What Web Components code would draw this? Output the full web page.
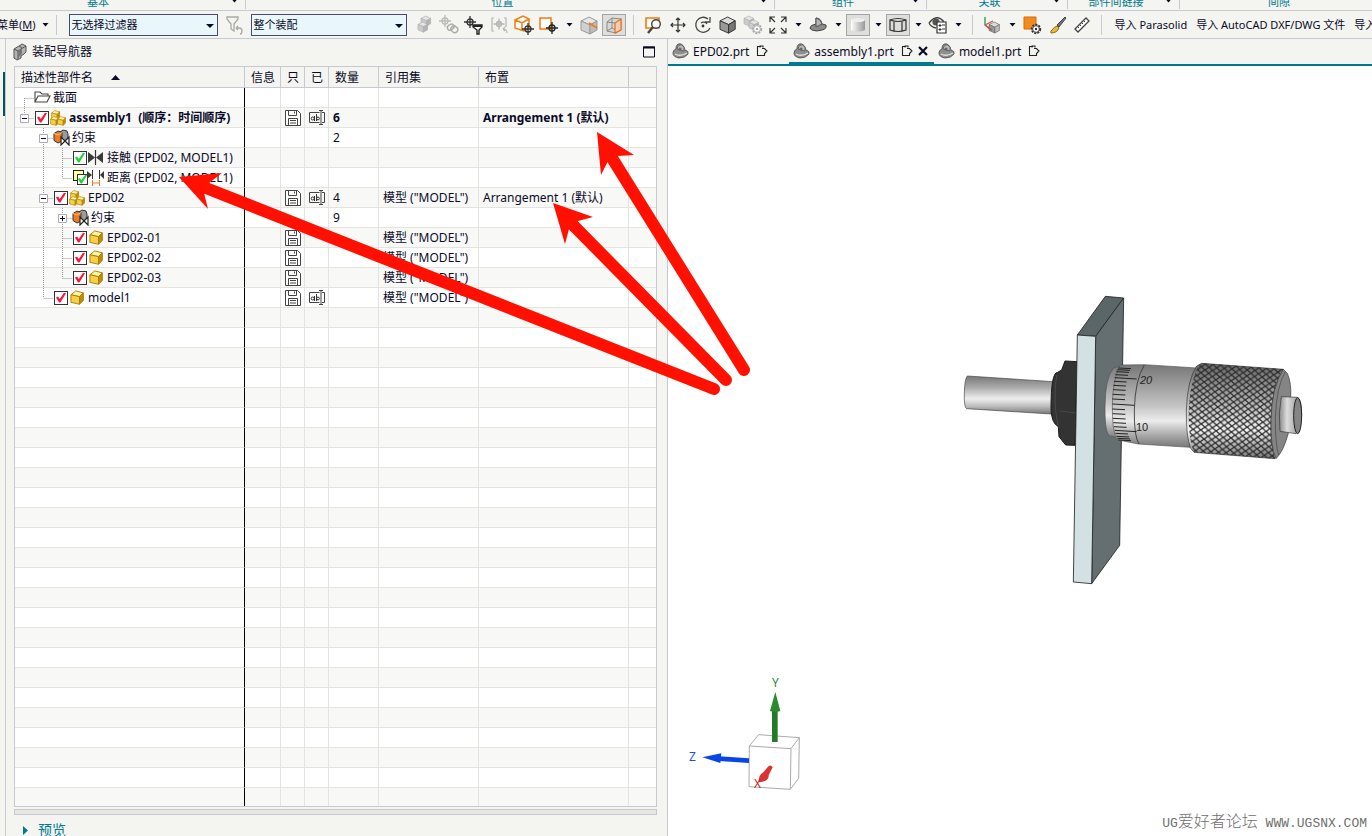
<!DOCTYPE html>
<html lang="zh-CN">
<head>
<meta charset="utf-8">
<title>装配导航器</title>
<style>
html,body{margin:0;height:100%;overflow:hidden;background:#f4f4f0}
body{font:12px/20px "Noto Sans","Noto Sans CJK SC",sans-serif;color:#0a0a28;
--line:#c8c8d2;--grid:#e3e3df;--teal:#007a8f;--panel:#f4f4f0}
</style>
</head>
<body>
<nx-app></nx-app>
<script>
const define=(name,html,setup)=>customElements.define(name,class extends HTMLElement{
  connectedCallback(){
    if(this.shadowRoot)return;
    const t=document.createElement('template');
    t.innerHTML=typeof html==='function'?html(this):html;
    this.attachShadow({mode:'open'}).append(t.content.cloneNode(true));
    if(setup)setup(this);
  }
});

/* ---------- icons ---------- */
const cube=(x,y,s,a,b,c,o)=>`<g transform="translate(${x} ${y}) scale(${s})" stroke="${o}" stroke-linejoin="round"><path d="M0 4 8 0l8 4-7 4z" fill="${a}"/><path d="M0 4l9 4v9l-9-4z" fill="${b}"/><path d="M16 4l-7 4v9l7-4z" fill="${c}"/></g>`;
const gold=(x,y,s)=>`<g transform="translate(${x} ${y}) scale(${s})" stroke="#b07c00" stroke-linejoin="round"><path d="M1 5 6 1l8 2-4 4z" fill="#fff6a8"/><path d="M1 5l9 2v8l-9-2z" fill="#f6d046"/><path d="M10 7l4-4v8l-4 4z" fill="#c08a0c"/></g>`;
const target=(x,y,r,c)=>`<g fill="none" stroke="${c}" stroke-width="1.3"><circle cx="${x}" cy="${y}" r="${r}"/><path d="M${x-r-3} ${y}h${2*r+6}M${x} ${y-r-3}v${2*r+6}"/></g>`;
const gear=(x,y,c)=>`<circle cx="${x}" cy="${y}" r="4.2" fill="#f4f4f0" stroke="${c}" stroke-width="2" stroke-dasharray="2 1.1"/><circle cx="${x}" cy="${y}" r="3.4" fill="#fff" stroke="${c}"/><circle cx="${x}" cy="${y}" r="1.2" fill="${c}"/>`;
const link='<path d="M7 3l3-2 4 1 1 3v5l-3 3" fill="#9b9b9b" stroke="#333"/><path d="M1 4.500 5 2l4 1.500v8.500L5 14l-4-2.500z" fill="#ef7a22" stroke="#333"/><path d="M1 4.500 5 6l4-2.500" fill="none" stroke="#ffc08a"/><path d="M8 8l8 8V8l-8 8z" fill="#fff" stroke="#222" stroke-width="1.2"/>';
const ICONS={
  part:[20,'<path d="M2 12q0-3 3-4 0-6 5-5 3 1 4 6 4 1 3 4-3 4-9 4-6-1-6-5z" fill="#8e8e8e" stroke="#5a5a5a"/><path d="M6 8q1-5 5-4 3 2 2 6-5-1-7-2z" fill="#b9b9b9" stroke="#666"/><path d="M4 13q5 3 12-1" fill="none" stroke="#e2e2e2" stroke-width="1.4"/><circle cx="9" cy="8" r="1.500" fill="#666"/>'],
  nav:[18,'<path d="M3 6l5-3 3-2 4 2v6l-2 2-3 2v2l-4 2-3-2z" fill="#b4b4b4" stroke="#555"/><path d="M3 6l4 2v8M7 8l3-2 5-3M8 3l3 2" fill="none" stroke="#555"/><path d="M7 8l4-2v5l-4 4z" fill="#777"/>'],
  funnel:[20,'<g fill="none" stroke="#a9a9a6" stroke-width="1.3"><path d="M3 2h11v2l-4 5v7l-3-2V9L3 4z"/><path d="M12 13h3q3 0 3 3t-2 3M12 13l2-2m-2 2 2 2"/></g>'],
  cubes:[20,cube(7,1,.6,'#e4e4e4','#ccc','#b4b4b4','#aaa')+cube(4,7,.6,'#e4e4e4','#ccc','#b4b4b4','#aaa')],
  chain:[20,target(6,6,3,'#bbb')+'<g fill="none" stroke="#aaa" stroke-width="1.4"><rect x="8" y="10" width="7" height="5" rx="2.5" transform="rotate(-35 11 12)"/><rect x="12" y="11" width="7" height="6" rx="3" transform="rotate(40 15 14)"/></g>'],
  tfunnel:[20,target(6,7,3,'#333')+'<path d="M9 10h9v2l-3 3v4h-2v-4l-4-3z" fill="#fff" stroke="#222" stroke-width="1.4"/><path d="M9 10h9v2H9z" fill="#222"/>'],
  brack:[20,target(10,9,2.5,'#b5b5b3')+'<path d="M5 3H3v13h2M15 3h2v9M18 18q0-4-4-4m0 0 2-2m-2 2 2 2" fill="none" stroke="#b5b5b3" stroke-width="1.2"/>'],
  cubeT:[20,'<path d="M1 5 9 1l6 3v9l-5 3-9-3zM1 5l7 3 7-4M8 8v8" fill="#fff" stroke="#ef7d12" stroke-width="1.5"/>'+target(14,14,3,'#333')],
  rectT:[20,'<path d="M1 3h11v11H1z" fill="#fff" stroke="#ef7d12" stroke-width="1.5"/>'+target(13,13,3,'#222')],
  cubeL:[20,cube(2,2,1,'#e6e6e6','#d0d0d0','#bcbcbc','#999')+'<path d="M10 8l8 5" stroke="#ef7d12" stroke-width="1.8"/>'],
  cubeR:[20,'<path d="M3 7 8 3l9 1v11l-5 3-9-2z" fill="#d8d8d6" stroke="#888"/><path d="M8 3v10l-5 3M8 13l4 2M3 7l8 1" stroke="#888" fill="none"/><path d="M11 8l6-4v11l-6 3z" fill="#ead0bb" stroke="#ef6d12" stroke-width="1.2"/>'],
  zoom:[20,'<path d="M3 3h13v10H3z" fill="#fffdf5" stroke="#ef7d12" stroke-width="1.6"/><circle cx="13" cy="9" r="4.3" fill="#f6f6f2" stroke="#444" stroke-width="1.4"/><path d="M10 12l-5 6" stroke="#444" stroke-width="2.4"/>'],
  pan:[20,'<path d="M10 3v14M3 10h14M8 5l2-2 2 2M8 15l2 2 2-2M5 8l-2 2 2 2M15 8l2 2-2 2" fill="none" stroke="#333" stroke-width="1.2"/>'],
  rot:[20,'<path d="M15 4A7.5 7.5 0 1 0 17 13M17 2v5h-5M14 9a4 4 0 0 0-6-1" fill="none" stroke="#444" stroke-width="1.3"/><circle cx="10" cy="11" r="1.4" fill="#333"/>'],
  cubeD:[20,cube(2,2,.95,'#ddd','#999','#777','#333')],
  cubeG:[20,cube(1,1,.6,'#e4e4e4','#ccc','#bbb','#aaa')+cube(6,5,.6,'#e4e4e4','#ccc','#bbb','#aaa')+gear(14,14,'#aaa')],
  fit:[20,'<path d="M2 7V2h5M13 2h5v5M18 13v5h-5M7 18H2v-5M2 2l5 5M18 2l-5 5M18 18l-5-5M2 18l5-5" fill="none" stroke="#333" stroke-width="1.2"/>'],
  clip3:[20,'<path d="M2 13q0-3 6-4V3q5 0 6 6l4 1q1 4-4 5-6 2-10 0-2-1-2-2z" fill="#8b8b8b" stroke="#444"/><path d="M8 3q5 1 6 6l-6 3z" fill="#b6b6b6" stroke="#555"/>'],
  cylS:[22,'<defs><linearGradient id="g"><stop stop-color="#fff"/><stop offset="1" stop-color="#999"/></linearGradient></defs><path d="M4 6q7-4 14 0v10q-7 3-14 0z" fill="url(#g)"/><ellipse cx="11" cy="6" rx="7" ry="2" fill="#eee"/>'],
  cylW:[22,'<path d="M3 6q8-3 16 0v10q-8 3-16 0z" fill="#dcdcd9" stroke="#333" stroke-width="1.2"/><path d="M3 6q8 3 16 0M7 8v9M15 8v9" fill="none" stroke="#333" stroke-width="1.2"/>'],
  eye:[20,'<path d="M1 8q8-10 15-1M1 8q2 4 7 5" fill="none" stroke="#444" stroke-width="1.4"/><circle cx="8" cy="7" r="3.6" fill="#555"/><path d="M9 7h9v11H9z" fill="#fff" stroke="#333" stroke-width="1.2"/><path d="M11 10h2v1h-2zM11 14h2v1h-2zM14 10h3M14 14h3" stroke="#333" fill="#333"/>'],
  csys:[20,cube(7,7,.65,'#ddd','#999','#bbb','#666')+'<path d="M3 2v8l7 5" fill="none" stroke="#1f9a55" stroke-width="1.3"/><path d="M3 10l8-4M3 10l6 5" stroke="#e34848" stroke-width="1.3"/>'],
  orgear:[20,'<path d="M2 2h12v12H2z" fill="#f28a1e" stroke="#d66d05"/>'+gear(14,14,'#333')],
  brush:[20,'<path d="M18 2 10 10l2 2 7-9z" fill="#777" stroke="#444"/><path d="M10 11l2 2q-2 5-8 5-1-2 1-3 2-3 5-4z" fill="#e7b93c" stroke="#8b6a10"/>'],
  ruler:[20,'<path d="M3 14 14 3l3 3L6 17z" fill="#fff" stroke="#444" stroke-width="1.3"/><path d="M6 12l1 1M8 10l1 1M10 8l1 1M12 6l1 1" stroke="#444"/>'],
  folder:[17,'<path d="M1 13V3h5l2 2h6v2M1 13l3-6h12l-3 6z" fill="#fff" stroke="#444" stroke-width="1.1"/>'],
  asm:[17,gold(2,1,.62)+gold(1,7,.62)+gold(8,7,.62)],
  prt:[17,gold(2,1,.95)],
  cons:[17,link],
  touch:[17,'<path d="M1 3l7 5.5L1 14zM16 3 9 8.500l7 5.500z" fill="#3a3a3a"/><path d="M8.500 1v15" stroke="#333" stroke-width="1.2"/>'],
  dist:[17,'<path d="M0 2l5 4-5 4zM17 2l-4 4 4 4z" fill="#3a3a3a"/><path d="M5.500 1v9M12.500 1v9" stroke="#333"/><path d="M5.500 11v6M12.500 11v6M6 14h6" stroke="#e97b2a"/>'],
  save:[16,'<path d="M.5.5h12l3 3v12H.5z" fill="#fff" stroke="#444"/><path d="M3.500.5v5h8v-5M9.500 1.500v2M3.500 15.500v-7h9v7M5 10.500h6M5 13h6" fill="none" stroke="#444"/>'],
  clip:[12,'<path d="M5 1.500H1.500v9h7V8M4 2.500V1h3v1.500M6 3.500h2.500L11 6 8.500 8.500" fill="none" stroke="#222" stroke-width="1.1"/>'],
  close:[10,'<path d="M1 1l8 8M9 1l-8 8" stroke="#0a0a28" stroke-width="2.2"/>'],
  max:[12,'<path d="M.5 1h11v10H.5z" fill="none" stroke="#0a0a28"/><path d="M0 1.500h12" stroke="#0a0a28" stroke-width="2"/>'],
  down:[9,'<path d="M1.500 3h6l-3 3.500z" fill="#0a0a28"/>'],
  pick:[9,'<path d="M1 3h8L5 7z" fill="#0a0a28"/>'],
  up:[9,'<path d="M0 7h9L4.500 2z" fill="#0a0a28"/>'],
  right:[9,'<path d="M2 0v9l5-4.500z" fill="#007a8f"/>']
};
define('nx-icon',el=>{const [s,d]=ICONS[el.getAttribute('name')];
  return `<style>:host{display:inline-flex;flex:none}svg{display:block}</style><svg width="${s}" height="${s}" viewBox="0 0 ${s} ${s}" aria-hidden="true">${d}</svg>`});

/* ---------- ribbon footer ---------- */
define('nx-ribbon',()=>{
  const g=[['基本',1],['位置',1],['组件',1],['关联',1],['部件间链接',1],['间隙',0]];
  return `<style>
  :host{display:grid;grid-template-columns:246fr 529fr 152fr 141fr 112fr 192fr;height:10px;overflow:hidden;border-bottom:1px solid var(--line);font-size:11px;line-height:14px;color:var(--teal)}
  div{display:flex;align-items:flex-end;height:9px;border-right:1px solid var(--line);box-sizing:border-box}
  div:first-of-type span{padding-right:34px}
  div:last-child{border:0;padding-left:6px}
  span{flex:1;text-align:center;white-space:nowrap}
  nx-icon{width:9px;margin:0 6px 4px 0}
  </style>`+g.map(([t,a])=>`<div><span>${t}</span>${a?'<nx-icon name="down"></nx-icon>':''}</div>`).join('')});

/* ---------- toolbar ---------- */
define('nx-tool',el=>`<style>
  :host{display:flex;flex:none;width:25px;justify-content:center}
  :host([drop]){width:15px}
  button{all:unset;box-sizing:border-box;display:flex;align-items:center;justify-content:center;width:24px;height:22px}
  :host([drop]) button{width:15px}
  :host([pressed]) button{background:#dededa;border:1px solid #a3a3a8}
  </style><button aria-label="${el.getAttribute('icon')}"><nx-icon name="${el.getAttribute('icon')}"></nx-icon></button>`);

define('nx-toolbar',()=>{
  const t=(s)=>s.split(' ').map(n=>n==='|'?'<i></i>':n==='v'?'<nx-tool icon="down" drop></nx-tool>':n[0]==='*'?`<nx-tool icon="${n.slice(1)}" pressed></nx-tool>`:`<nx-tool icon="${n}"></nx-tool>`).join('');
  return `<style>
  :host{display:flex;align-items:center;height:27px;overflow:hidden;border-bottom:1px solid var(--line);font-size:11px;line-height:16px;white-space:nowrap}
  i{flex:none;width:1px;height:20px;background:var(--line);margin:0 7px 0 6px}
  button{all:unset;flex:none;padding:0 5px 0 4px}
  .menu{display:flex;align-items:center;gap:5px;padding:0;margin-left:-3px}
  label{position:relative;display:flex;flex:none}
  label nx-icon{position:absolute;right:4px;top:7px}
  select{appearance:none;box-sizing:border-box;height:22px;border:1px solid #4a4a6a;border-radius:0;background:#e9f7fa;color:inherit;font:inherit;padding:0 14px 0 2px;margin:0}
  .a{width:149px}.b{width:156px}
  label:first-of-type{margin-left:5px}
  .f{margin:0 4px}
  .g{margin-left:5px}
  .imp{display:flex;margin-left:2px}
  </style>
  <button class="menu"><span>菜单(<u>M</u>)</span><nx-icon name="down"></nx-icon></button><i></i>
  <label><select class="a" aria-label="过滤器"><option>无选择过滤器</option></select><nx-icon name="pick"></nx-icon></label>
  <nx-tool class="f" icon="funnel"></nx-tool>
  <label><select class="b" aria-label="范围"><option>整个装配</option></select><nx-icon name="pick"></nx-icon></label>
  <nx-tool class="g" icon="cubes"></nx-tool>${t('chain tfunnel brack cubeT rectT v cubeL *cubeR | zoom pan rot cubeD cubeG fit v clip3 v *cylS v *cylW v eye v | csys v orgear brush ruler |')}
  <div class="imp"><button>导入 Parasolid</button><button>导入 AutoCAD DXF/DWG 文件</button><button>导入</button></div>`});

/* ---------- tree ---------- */
define('nx-check',el=>`<style>
  :host{display:flex;flex:none}
  input{appearance:none;width:14px;height:14px;margin:0;border:1px solid #333;background:#fff;box-sizing:border-box;position:relative}
  input::before{content:"";position:absolute;left:1px;top:1px;width:10px;height:10px;background:var(--tick,#f5183c);clip-path:polygon(0 50%,20% 40%,38% 65%,82% 0,100% 8%,44% 100%,30% 100%)}
  :host([green]),:host([stack]){--tick:#1fd03a}
  :host([stack]){box-sizing:border-box;width:14px;height:16px;padding:4px 0 0 4px;background:linear-gradient(#ffffa0,#ffffa0) 1px 1px/9px 9px no-repeat,linear-gradient(#222,#222) 0 0/11px 11px no-repeat}
  :host([stack]) input{flex:none;width:11px;height:11px}
  :host([stack]) input::before{left:0;top:0;width:9px;height:9px}
  </style><input type="checkbox" checked aria-label="${el.getAttribute('label')}">`);

/* guide kinds: v vertical, t tee, l elbow, s start, - and + expanders, ^ expander at the foot of a branch */
define('nx-guide',el=>{
  const k=el.getAttribute('kind');let d='',box='';
  if('vtl-+^'.includes(k))d+='M9.500 0v10';
  if('vts-+'.includes(k))d+='M9.500 10v10';
  if('tls-+^'.includes(k))d+='M9.500 10.500h10';
  if('-+^'.includes(k))box='<path d="M5.500 6.500h8v8h-8z" fill="#fff" stroke="#aaaabc"/><path d="M7 10.500h5'+(k==='+'?'M9.500 8v5':'')+'" stroke="#0a0a28"/>';
  return `<style>:host{display:flex;flex:none;width:19px;height:20px}</style><svg width="19" height="20" aria-hidden="true"><path d="${d}" stroke="#999" stroke-dasharray="1 1" fill="none"/>${box}</svg>`});

define('nx-tree',()=>{
  const M='模型 ("MODEL")',A='Arrangement 1 (默认)';
  const rows=[
    ['s','','folder','截面'],
    ['^','r','asm','assembly1  (顺序：时间顺序)',1,1,'6','',A,'b'],
    [' -','','cons','约束',0,0,'2'],
    [' vt','g','touch','接触 (EPD02, MODEL1)'],
    [' vl','y','dist','距离 (EPD02, MODEL1)'],
    [' -','r','asm','EPD02',1,1,'4',M,A],
    [' v+','','cons','约束',0,0,'9'],
    [' vt','r','prt','EPD02-01',1,0,'',M],
    [' vt','r','prt','EPD02-02',1,0,'',M],
    [' vl','r','prt','EPD02-03',1,0,'',M],
    [' l','r','prt','model1',1,1,'',M]];
  while(rows.length<36)rows.push(null);
  const attr={r:'',g:'green',y:'stack'};
  const body=rows.map(r=>{
    if(!r)return '<tr>'+'<td></td>'.repeat(8)+'</tr>';
    const [g,c,ic,t,sv,ab,n,m,a,b]=r;
    return `<tr${b?' class="bold"':''}><td><div class="node">${[...g].map(k=>`<nx-guide kind="${k}"></nx-guide>`).join('')}${c?`<nx-check ${attr[c]} label="${t}"></nx-check>`:''}<nx-icon name="${ic}"></nx-icon><span>${t}</span></div></td><td></td><td>${sv?'<nx-icon class="cell" name="save"></nx-icon>':''}</td><td>${ab?'<nx-rename class="cell"></nx-rename>':''}</td><td>${n||''}</td><td>${m||''}</td><td>${a||''}</td><td></td></tr>`}).join('');
  return `<style>
  :host{display:block;overflow:hidden;border:1px solid var(--line);background:#fff}
  table{border-collapse:separate;border-spacing:0;table-layout:fixed;width:100%}
  col:nth-child(1){width:230px}col:nth-child(2){width:36px}col:nth-child(3),col:nth-child(4){width:24px}
  col:nth-child(5){width:50px}col:nth-child(6){width:100px}col:nth-child(7){width:150px}
  th,td{box-sizing:border-box;padding:0 0 0 4px;height:20px;line-height:19px;text-align:left;white-space:pre;overflow:hidden;border-right:1px solid var(--grid);border-bottom:1px solid var(--grid)}
  th{height:21px;line-height:18px;padding:2px 0 0 6px;font-weight:400;background:var(--panel);border-color:var(--line)}
  th nx-icon{margin-left:18px}
  td:first-child{padding:0;border-right-color:#000}
  th:last-child,td:last-child{border-right:0}
  tr:nth-child(even) td{background:#f8f8f7}
  .bold{font-weight:700}
  .cell{vertical-align:top;margin-top:2px}
  .node{display:flex;align-items:center;height:19px}
  .node nx-check{margin-left:1px}
  .node span{margin-left:2px}
  .node nx-check~span{margin-left:3px}
  </style>
  <table><colgroup>${'<col>'.repeat(8)}</colgroup><thead><tr><th>描述性部件名<nx-icon name="up"></nx-icon></th><th>信息</th><th>只</th><th>已</th><th>数量</th><th>引用集</th><th>布置</th><th></th></tr></thead><tbody>${body}</tbody></table>`});

define('nx-rename',`<style>:host{display:inline-flex}</style><svg width="16" height="16" aria-hidden="true"><path d="M10.500 2.500H.5v10h10M13 2.500h2.500v10H13M10 .5h4M10 14.500h4M12 .5v14" fill="none" stroke="#444"/><circle cx="3.700" cy="8.500" r="1.500" fill="none" stroke="#333"/><path d="M5.500 6v5M7.500 4v7" stroke="#333"/><circle cx="9" cy="8.500" r="1.400" fill="none" stroke="#333"/></svg>`);

define('nx-navigator',`<style>
  :host{display:grid;grid-template-rows:27px minmax(0,1fr) 6px 21px;padding:0 10px 0 8px;min-width:0;min-height:0}
  header{display:flex;align-items:center;gap:3px;padding:0 2px 2px 0;margin-left:-3px}
  header button{margin-left:auto}
  h1{font:inherit;margin:0}
  button{all:unset;display:flex;align-items:center}
  nx-tree{margin-bottom:2px}
  .bar{border:1px solid var(--line);background:#e6e8e0;box-sizing:border-box}
  .preview{font-size:14px;line-height:20px;color:var(--teal);gap:8px;padding:5px 0 0 7px;height:20px;white-space:nowrap}
  </style>
  <header><nx-icon name="nav"></nx-icon><h1>装配导航器</h1><button aria-label="最大化"><nx-icon name="max"></nx-icon></button></header>
  <nx-tree></nx-tree><div class="bar"></div>
  <button class="preview"><nx-icon name="right"></nx-icon>预览</button>`);

/* ---------- documents ---------- */
define('nx-tab',el=>`<style>
  :host{display:flex;align-items:center;box-sizing:border-box;height:25px;padding:0 6px 0 3px;border-bottom:2px solid transparent;white-space:nowrap;line-height:22px}
  :host([active]){border-color:var(--teal)}
  button{all:unset;display:flex;align-items:center;gap:1px}
  button span{padding:2px 0 0 1px}
  nx-icon[name=clip]{margin-left:6px}
  .x{margin-left:5px;visibility:hidden}
  :host([active]) .x{visibility:visible}
  </style><button><nx-icon name="part"></nx-icon><span><slot></slot></span><nx-icon name="clip"></nx-icon></button><button class="x" aria-label="关闭"><nx-icon name="close"></nx-icon></button>`);

const ticks=(()=>{let s='';for(let i=0;i<21;i++){
  const a=-1.3+i*2.6/20,y=372+112*Math.sin(a),x=487+24*(1-Math.cos(a)),long=[4,10,16].includes(i);
  s+=`M${x.toFixed(0)} ${y.toFixed(0)}L${(x+(long?66:38)).toFixed(0)} ${(y+(long?4:2)).toFixed(0)}`}
  return s})();
define('nx-scene',`<style>:host{display:block;position:relative;overflow:hidden;min-height:0;background:#fff}
  svg{display:block;width:100%}
  p{position:absolute;right:5px;bottom:2px;margin:0;font:13px/20px "Liberation Mono",monospace;color:#707070;white-space:pre}
  p span{font-family:"Noto Sans CJK SC",sans-serif;font-size:16px;font-weight:300}
  </style>
  <svg viewBox="668 66 704 770" role="img" aria-label="assembly1">
  <defs>
  <linearGradient id="rod" x2="0" y2="1"><stop stop-color="#777"/><stop offset=".3" stop-color="#aaa"/><stop offset=".6" stop-color="#eee"/><stop offset=".8" stop-color="#bbb"/><stop offset="1" stop-color="#777"/></linearGradient>
  <linearGradient id="drum" x2="0" y2="1"><stop stop-color="#777"/><stop offset=".25" stop-color="#9d9d9d"/><stop offset=".5" stop-color="#c4c4c4"/><stop offset=".68" stop-color="#ececec"/><stop offset=".85" stop-color="#aaa"/><stop offset="1" stop-color="#777"/></linearGradient>
  <linearGradient id="kn" x2="0" y2="1"><stop stop-color="#666"/><stop offset=".4" stop-color="#b4b4b4"/><stop offset=".7" stop-color="#f6f6f6"/><stop offset="1" stop-color="#777"/></linearGradient>
  <linearGradient id="knob"><stop stop-color="#888"/><stop offset=".35" stop-color="#ddd"/><stop offset="1" stop-color="#888"/></linearGradient>
  <pattern id="hatch" width="23" height="18" patternUnits="userSpaceOnUse" patternTransform="rotate(4)"><path d="M0 0l23 18M23 0L0 18" stroke="#2c2c2c" stroke-width="4"/></pattern>
  </defs>
  <g transform="translate(950 280) scale(.333333)" stroke-linejoin="round">
  <path d="M52 288l258 17-7 97-253-16q-8-2-7-46t9-52z" fill="url(#rod)" stroke="#444" stroke-width="2"/>
  <path d="M345 243l37 2-7 251-28-1-20-25-2-30q-21-10-22-55 0-108 20-108l12-7z" fill="#333" stroke="#1c1c1c" stroke-width="3"/>
  <path d="M320 285q-12 80 4 150M328 393l52 6" fill="none" stroke="#555" stroke-width="2"/>
  <path d="M382 165l84-116 55 5-84 115z" fill="#5a6668" stroke="#222" stroke-width="2.500"/>
  <path d="M437 169l84-115-12 742-84 115z" fill="#656e70" stroke="#222" stroke-width="2.500"/>
  <path d="M382 165l55 4-12 742-55-5z" fill="#d3e0e4" stroke="#222" stroke-width="2.500"/>
  <path d="M490 264q-25 30-25 121t20 83l25 10 10-223z" fill="url(#drum)" stroke="#555" stroke-width="2"/>
  <path d="M510 255l73-1 157 10-20 238-155-10-65-13q-14-29-13-104t23-120z" fill="url(#drum)" stroke="#555" stroke-width="2"/>
  <path d="M583 255q-28 45-30 135-1 80 14 102" fill="none" stroke="#333" stroke-width="2.500"/>
  <path d="${ticks}" fill="none" stroke="#222" stroke-width="3"/>
  <path d="M740 258l15-8 245 18q-35 52-37 152-1 80 12 116l-243-19-10-12q-14-35-13-115 3-90 31-132z" fill="url(#kn)" stroke="#333" stroke-width="2"/>
  <path d="M745 258l10-8 245 18q-35 52-37 152-1 80 12 116l-243-19q-16-37-16-117 3-90 29-142z" fill="url(#hatch)"/>
  <path d="M1000 268l12 12q13 30 10 72l-7 108q-15 55-37 76-17-36-15-116 2-100 37-152z" fill="#858585" stroke="#333" stroke-width="2"/>
  <path d="M1006 275q-27 45-30 140 0 80 10 110" fill="none" stroke="#444" stroke-width="2"/>
  <path d="M994 350l49 2q12 8 12 53-2 45-17 56l-48-7q-6-54 4-104z" fill="url(#knob)" stroke="#333" stroke-width="2"/>
  <ellipse cx="1043" cy="407" rx="12" ry="54" fill="#858585" stroke="#222" stroke-width="3"/>
  </g>
  <g font-family="Liberation Sans,sans-serif" font-size="11" fill="#222"><text x="1140" y="384" font-style="italic">20</text><text x="1136" y="431">10</text></g>
  <g transform="translate(670 660) scale(.333333)">
  <path d="M238 258l125 8-2 122-124-8zM238 258l28-34 122 9-25 33M388 233l-2 122-25 33" fill="none" stroke="#aaa" stroke-width="3"/>
  <path d="M306 150h17v96h-17z" fill="#237a27"/><path d="M316 96l-16 57q15 6 31 0z" fill="#2a8a2d"/>
  <path d="M237 295v14l-90-6v-14z" fill="#0a45e8"/><path d="M97 292l57-12-3 29z" fill="#0a45e8"/>
  <path d="M294 320q8-8 14 2l-12 24q2 18-30 21 0-24 14-30z" fill="#d93434"/>
  </g>
  <g font-family="Noto Sans,sans-serif" font-size="12"><text x="772" y="687" fill="#2a8a2d">Y</text><text x="689" y="761" fill="#1450f0">Z</text><text x="754" y="788" fill="#c22">X</text></g>
  </svg>
  <p>UG<span>爱好者论坛</span> WWW.UGSNX.COM</p>`);

define('nx-documents',`<style>
  :host{display:flex;flex-direction:column;border-left:1px solid var(--line);min-width:0;min-height:0}
  nav{display:flex;flex:none;height:25px;border-bottom:2px solid var(--teal)}
  nx-scene{flex:1}
  </style><nav><nx-tab>EPD02.prt</nx-tab><nx-tab active>assembly1.prt</nx-tab><nx-tab>model1.prt</nx-tab></nav><nx-scene></nx-scene>`);

/* ---------- red callout arrows, laid over the whole window ---------- */
define('nx-callouts',`<style>:host{position:absolute;inset:0;pointer-events:none}svg{width:100%;height:100%;display:block}</style>
  <svg aria-hidden="true"><g stroke="#ff1000" stroke-width="12" stroke-linecap="round"><path d="M714 389L206 188M726 380L573 225M744 370L612 158"/></g>
  <g fill="#ff1000"><path d="M179 177l43-4-13 10-5 10 4 16z"/><path d="M553 203l40 14-15 4-9 8-4 15z"/><path d="M597 132l37 23-16 1-10 5-7 14z"/></g></svg>`);

define('nx-app',`<style>
  :host{display:flex;flex-direction:column;height:100vh;position:relative;overflow:hidden}
  main{flex:1;min-height:0;display:grid;grid-template-columns:6px minmax(0,661fr) minmax(0,705fr);grid-template-rows:minmax(0,1fr)}
  aside{box-sizing:border-box;border-right:1px solid var(--line);padding-top:33px}
  aside div{height:44px;margin-left:3px;background:#00545a}
  nx-ribbon,nx-toolbar{flex:none}
  </style><nx-ribbon></nx-ribbon><nx-toolbar></nx-toolbar>
  <main><aside><div></div></aside><nx-navigator></nx-navigator><nx-documents></nx-documents></main><nx-callouts></nx-callouts>`);
</script>
</body>
</html>
